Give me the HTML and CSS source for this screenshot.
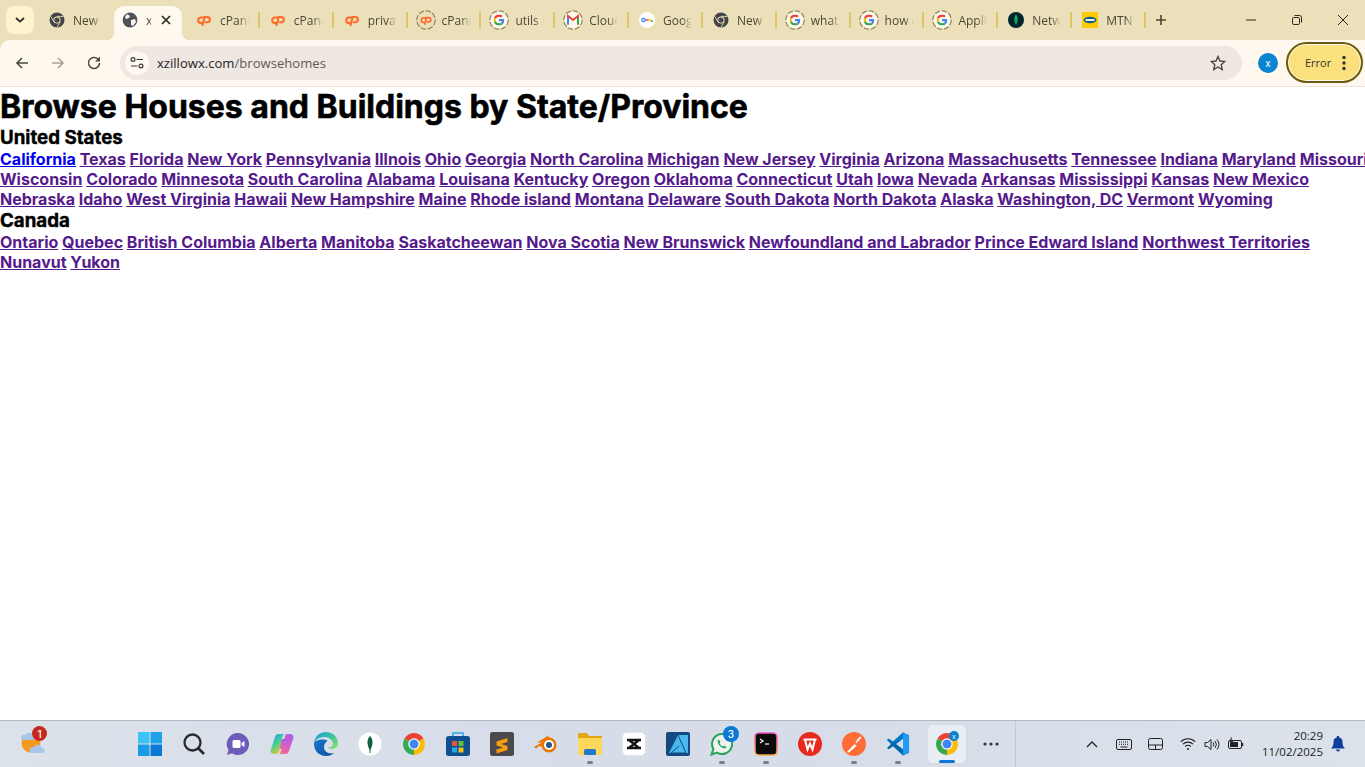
FILE: index.html
```html
<!DOCTYPE html>
<html lang="en">
<head>
<meta charset="utf-8">
<title>Browse Houses and Buildings</title>
<link rel="stylesheet" href="styles.css">
</head>
<body>
<svg class="defs" width="0" height="0" aria-hidden="true">
  <defs>
    <linearGradient id="copl" x1="0" y1="0" x2=".6" y2="1"><stop offset="0" stop-color="#2f8fe8"/><stop offset=".5" stop-color="#3fcf9a"/><stop offset="1" stop-color="#f6c325"/></linearGradient>
    <linearGradient id="copr" x1="1" y1="0" x2=".2" y2="1"><stop offset="0" stop-color="#a45be8"/><stop offset=".6" stop-color="#d85fc4"/><stop offset="1" stop-color="#f2708a"/></linearGradient>
    <linearGradient id="edgea" x1="0" y1="0" x2="1" y2=".7"><stop offset="0" stop-color="#1f9fd8"/><stop offset=".6" stop-color="#35c1a6"/><stop offset="1" stop-color="#79dc6c"/></linearGradient>
    <linearGradient id="edgeb" x1="0" y1="0" x2="1" y2="1"><stop offset="0" stop-color="#1678d0"/><stop offset="1" stop-color="#0b4f9e"/></linearGradient>
    <linearGradient id="termedge" x1="0" y1="0" x2="0" y2="1"><stop offset="0" stop-color="#e85bc0"/><stop offset="1" stop-color="#f5a742"/></linearGradient>
    <symbol id="g" viewBox="0 0 48 48">
      <path fill="#EA4335" d="M24 9.5c3.54 0 6.71 1.22 9.21 3.6l6.85-6.85C35.9 2.38 30.47 0 24 0 14.62 0 6.51 5.38 2.56 13.22l7.98 6.19C12.43 13.72 17.74 9.5 24 9.5z"/>
      <path fill="#4285F4" d="M46.98 24.55c0-1.57-.15-3.09-.38-4.55H24v9.02h12.94c-.58 2.96-2.26 5.48-4.78 7.18l7.73 6c4.51-4.18 7.09-10.36 7.09-17.65z"/>
      <path fill="#FBBC05" d="M10.53 28.59c-.48-1.45-.76-2.99-.76-4.59s.27-3.14.76-4.59l-7.98-6.19C.92 16.46 0 20.12 0 24c0 3.88.92 7.54 2.56 10.78l7.97-6.19z"/>
      <path fill="#34A853" d="M24 48c6.48 0 11.93-2.13 15.89-5.81l-7.73-6c-2.15 1.45-4.92 2.3-8.16 2.3-6.26 0-11.57-4.22-13.47-9.91l-7.98 6.19C6.51 42.62 14.62 48 24 48z"/>
    </symbol>
    <symbol id="ggroup" viewBox="0 0 20 20">
      <circle cx="10" cy="10" r="9.2" fill="#fff8ee" stroke="#98885c" stroke-width="1.3" stroke-dasharray="5.5 1.6"/>
      <use href="#g" x="4.5" y="4.5" width="11" height="11"/>
    </symbol>
    <symbol id="chromegray" viewBox="0 0 16 16">
      <circle cx="8" cy="8" r="7.5" fill="#43454a"/>
      <circle cx="8" cy="8" r="3.6" fill="#ebe0b9"/>
      <circle cx="8" cy="8" r="2.6" fill="#43454a"/>
      <path d="M8 4.4h6.4M4.9 9.8 1.8 4.4M11.1 9.8 8 15.2" stroke="#ebe0b9" stroke-width=".9"/>
    </symbol>
    <symbol id="cp" viewBox="0 0 16 16">
      <path d="M7.500 5.500 5 5.500a2.800 2.800 0 0 0 0 5.600h1.300" fill="none" stroke="#ff6c2c" stroke-width="2.100" stroke-linecap="round"/>
      <path d="M6.600 13 8.600 5H11.300a2.600 2.600 0 0 1 0 5.200H9.700" fill="none" stroke="#ff6c2c" stroke-width="2.100" stroke-linecap="round"/>
    </symbol>
    <symbol id="chrome" viewBox="0 0 48 48">
      <path fill="#ea4335" d="M24 24 5 13A22 22 0 0 1 43 13z"/>
      <path fill="#fbbc04" d="M24 24 43 13A22 22 0 0 1 24 46z"/>
      <path fill="#34a853" d="M24 24 24 46A22 22 0 0 1 5 13z"/>
      <circle cx="24" cy="24" r="11.5" fill="#fff"/>
      <circle cx="24" cy="24" r="9" fill="#4285f4"/>
    </symbol>
  </defs>
</svg>

<header class="browser">
<div class="tabstrip">
  <button class="tabsearch" type="button" aria-label="Search tabs"><svg width="10" height="6" viewBox="0 0 10 6"><path d="M1 1l4 3.6L9 1" fill="none" stroke="#2a2a20" stroke-width="1.8"/></svg></button>
  <div class="tab tab-first"><svg class="fav"><use href="#chromegray"/></svg><span class="tabtext">New Tab</span></div>
  <div class="tab-active"><svg class="fav" viewBox="0 0 16 16"><circle cx="8" cy="8" r="7.4" fill="#4c5158"/><path d="M5 2 8 4 7 6 4 7 3 5zM9 8l4-1 1 3-3 4-2-1z" fill="#fef8ee"/></svg><span class="tabtext tabtext-short">xzillowx</span><svg class="closex" width="10" height="10" viewBox="0 0 10 10"><path d="M1 1l8 8M9 1l-8 8" stroke="#2a2a20" stroke-width="1.7"/></svg></div>
  <div class="tab tab-nosep"><svg class="fav"><use href="#cp"/></svg><span class="tabtext">cPanel</span></div>
  <div class="tab"><svg class="fav"><use href="#cp"/></svg><span class="tabtext">cPanel</span></div>
  <div class="tab"><svg class="fav"><use href="#cp"/></svg><span class="tabtext">privacy</span></div>
  <div class="tab"><svg class="fav fav-big" viewBox="0 0 20 20"><circle cx="10" cy="10" r="9.2" fill="none" stroke="#98885c" stroke-width="1.3" stroke-dasharray="5.5 1.6"/><use href="#cp" x="3.5" y="3.5" width="13" height="13"/></svg><span class="tabtext">cPanel</span></div>
  <div class="tab"><svg class="fav fav-big"><use href="#ggroup"/></svg><span class="tabtext">utils in</span></div>
  <div class="tab"><svg class="fav fav-big" viewBox="0 0 20 20"><circle cx="10" cy="10" r="9.2" fill="#fff8ee" stroke="#98885c" stroke-width="1.3" stroke-dasharray="5.5 1.6"/><path d="M5 14.500V6L10 10l5-4v8.500" fill="none" stroke="#ea4335" stroke-width="2"/><path d="M5 7.500v7" stroke="#4285f4" stroke-width="2"/><path d="M15 7.500v7" stroke="#34a853" stroke-width="2"/></svg><span class="tabtext">Cloudflare</span></div>
  <div class="tab"><svg class="fav" viewBox="0 0 16 16"><circle cx="8" cy="8" r="8" fill="#fff"/><circle cx="4.500" cy="8" r="1.700" fill="none" stroke="#4285f4" stroke-width="1.300"/><path d="M6.500 8h3" stroke="#ea4335" stroke-width="1.500"/><path d="M9.500 8h3" stroke="#fbbc04" stroke-width="1.500"/><path d="M12 8.500h2v1.500h-2z" fill="#34a853"/></svg><span class="tabtext">Google</span></div>
  <div class="tab"><svg class="fav"><use href="#chromegray"/></svg><span class="tabtext">New Tab</span></div>
  <div class="tab"><svg class="fav fav-big"><use href="#ggroup"/></svg><span class="tabtext">what is</span></div>
  <div class="tab"><svg class="fav fav-big"><use href="#ggroup"/></svg><span class="tabtext">how do</span></div>
  <div class="tab"><svg class="fav fav-big"><use href="#ggroup"/></svg><span class="tabtext">Application</span></div>
  <div class="tab"><svg class="fav" viewBox="0 0 16 16"><circle cx="8" cy="8" r="8" fill="#04242e"/><path d="M8 2.500c2 2.200 2.600 5.500 0 10.500-2.600-5-2-8.300 0-10.500z" fill="#13aa52"/></svg><span class="tabtext">Network</span></div>
  <div class="tab"><svg class="fav" viewBox="0 0 16 16"><rect width="16" height="16" fill="#fc0"/><ellipse cx="8" cy="8" rx="6.500" ry="3.300" fill="#0b5c8a"/><rect x="3.500" y="7" width="9" height="2" fill="#f2f2e0"/></svg><span class="tabtext">MTN</span></div>
  <button class="newtab" type="button" aria-label="New tab"><svg width="12" height="12" viewBox="0 0 12 12"><path d="M6 1v10M1 6h10" stroke="#4a4630" stroke-width="1.600"/></svg></button>
  <div class="winctl">
    <svg width="12" height="12" viewBox="0 0 12 12"><path d="M1 6h10" stroke="#2a2a20"/></svg>
    <svg width="12" height="12" viewBox="0 0 12 12"><rect x="1.500" y="3.500" width="7" height="7" rx="1.300" fill="none" stroke="#2a2a20"/><path d="M3.500 1.500h5a2 2 0 0 1 2 2v5" fill="none" stroke="#2a2a20"/></svg>
    <svg width="12" height="12" viewBox="0 0 12 12"><path d="M1 1l10 10M11 1 1 11" stroke="#2a2a20"/></svg>
  </div>
</div>

<div class="toolbar">
  <svg class="navbtn" width="16" height="16" viewBox="0 0 16 16"><path d="M14 8H3M8 3 3 8l5 5" fill="none" stroke="#4a4a40" stroke-width="1.600"/></svg>
  <svg class="navbtn" width="16" height="16" viewBox="0 0 16 16"><path d="M2 8h11M8 3l5 5-5 5" fill="none" stroke="#a8a49a" stroke-width="1.600"/></svg>
  <svg class="navbtn" width="16" height="16" viewBox="0 0 16 16"><path d="M13.500 8A5.500 5.500 0 1 1 12 4.200L13.500 5.700" fill="none" stroke="#4a4a40" stroke-width="1.600"/><path d="M14 1.500v5h-5z" fill="#4a4a40"/></svg>
  <div class="omnibox">
    <span class="sitechip"><svg width="14" height="12" viewBox="0 0 14 12"><circle cx="3" cy="2.500" r="1.900" fill="none" stroke="#3a3a34" stroke-width="1.200"/><path d="M6.500 2.500H13M1 9h6.500" stroke="#3a3a34" stroke-width="1.200"/><circle cx="11" cy="9" r="1.900" fill="none" stroke="#3a3a34" stroke-width="1.200"/></svg></span>
    <span class="url"><span class="host">xzillowx.com</span>/browsehomes</span>
    <svg class="star" width="16" height="16" viewBox="0 0 16 16"><path d="M8 1.500 10 6l4.800.5-3.600 3.200 1 4.800L8 12l-4.200 2.500 1-4.800L1.200 6.500 6 6z" fill="none" stroke="#4a4a40" stroke-width="1.400"/></svg>
  </div>
  <span class="avatar">x</span>
  <div class="errorpill"><span>Error</span><svg width="4" height="16" viewBox="0 0 4 16"><circle cx="2" cy="2.500" r="1.700" fill="#333"/><circle cx="2" cy="8" r="1.700" fill="#333"/><circle cx="2" cy="13.500" r="1.700" fill="#333"/></svg></div>
</div>
</header>

<main class="page">
  <h1>Browse Houses and Buildings by State/Province</h1>
  <h2>United States</h2>
  <div class="links">
    <a class="fresh" href="#">California</a> <a href="#">Texas</a> <a href="#">Florida</a> <a href="#">New York</a> <a href="#">Pennsylvania</a> <a href="#">Illnois</a> <a href="#">Ohio</a> <a href="#">Georgia</a> <a href="#">North Carolina</a> <a href="#">Michigan</a> <a href="#">New Jersey</a> <a href="#">Virginia</a> <a href="#">Arizona</a> <a href="#">Massachusetts</a> <a href="#">Tennessee</a> <a href="#">Indiana</a> <a href="#">Maryland</a> <a href="#">Missouri</a> <a href="#">Wisconsin</a> <a href="#">Colorado</a> <a href="#">Minnesota</a> <a href="#">South Carolina</a> <a href="#">Alabama</a> <a href="#">Louisana</a> <a href="#">Kentucky</a> <a href="#">Oregon</a> <a href="#">Oklahoma</a> <a href="#">Connecticut</a> <a href="#">Utah</a> <a href="#">Iowa</a> <a href="#">Nevada</a> <a href="#">Arkansas</a> <a href="#">Mississippi</a> <a href="#">Kansas</a> <a href="#">New Mexico</a> <a href="#">Nebraska</a> <a href="#">Idaho</a> <a href="#">West Virginia</a> <a href="#">Hawaii</a> <a href="#">New Hampshire</a> <a href="#">Maine</a> <a href="#">Rhode island</a> <a href="#">Montana</a> <a href="#">Delaware</a> <a href="#">South Dakota</a> <a href="#">North Dakota</a> <a href="#">Alaska</a> <a href="#">Washington, DC</a> <a href="#">Vermont</a> <a href="#">Wyoming</a>
  </div>
  <h2>Canada</h2>
  <div class="links">
    <a href="#">Ontario</a> <a href="#">Quebec</a> <a href="#">British Columbia</a> <a href="#">Alberta</a> <a href="#">Manitoba</a> <a href="#">Saskatcheewan</a> <a href="#">Nova Scotia</a> <a href="#">New Brunswick</a> <a href="#">Newfoundland and Labrador</a> <a href="#">Prince Edward Island</a> <a href="#">Northwest Territories</a> <a href="#">Nunavut</a> <a href="#">Yukon</a>
  </div>
</main>

<footer class="taskbar">
  <div class="weather">
    <svg width="26" height="26" viewBox="0 0 26 26"><circle cx="11" cy="12" r="9.500" fill="#f39a1e"/><path d="M2.500 9h12a2.500 2.500 0 0 0-1.500-4.500A4.500 4.500 0 0 0 5 4a2.800 2.800 0 0 0-2.500 5z" fill="#a9c6ea"/><path d="M11.500 22h11a2.500 2.500 0 0 0-.5-5 4.500 4.500 0 0 0-8.500-.5 2.800 2.800 0 0 0-2 5.500z" fill="#a9c6ea"/></svg>
    <span class="badge badge-red">1</span>
  </div>
  <div class="apps">
    <span class="app"><svg width="24" height="24" viewBox="0 0 24 24"><rect width="11.500" height="11.500" fill="#3cc4f4"/><rect x="12.500" width="11.500" height="11.500" fill="#1ea2ea"/><rect y="12.500" width="11.500" height="11.500" fill="#1a9be6"/><rect x="12.500" y="12.500" width="11.500" height="11.500" fill="#0a78d4"/></svg></span>
    <span class="app"><svg width="24" height="24" viewBox="0 0 24 24"><circle cx="10.500" cy="10.500" r="8" fill="none" stroke="#2a2a2a" stroke-width="2.300"/><path d="m16 16 6 6" stroke="#2a2a2a" stroke-width="2.600"/></svg></span>
    <span class="app"><svg width="24" height="24" viewBox="0 0 24 24"><path d="M12 1a11 11 0 1 1-6 20.200L1 23l1.500-5A11 11 0 0 1 12 1z" fill="#6d5db8"/><rect x="6.500" y="8" width="8" height="8" rx="1.500" fill="#fff"/><path d="m15.500 11 3-2v6l-3-2z" fill="#fff"/></svg></span>
    <span class="app"><svg width="24" height="24" viewBox="0 0 24 24"><path d="M16 22h-6l5-18c.5-1.500 2-2 3-2h2c3 0 4 3 3 5l-4 12c-.5 2-2 3-3 3z" fill="url(#copr)"/><path d="M9 7h9l-3 10H6z" fill="url(#copr)"/><path d="M8 2h7c-1.200 0-2 1-2.500 2.500L9 20c-.5 1.500-2 2-3 2H4c-3 0-4-3-3-5L5 5c.5-2 2-3 3-3z" fill="url(#copl)"/></svg></span>
    <span class="app"><svg width="24" height="24" viewBox="0 0 24 24"><path d="M12 0C5 0 0 5 0 12c1-4 5-7 10-7 6 0 9 4 9 7 0 2-2 3.500-5 3.500 2 1.500 6 2 8 0 1.500-1 2-2.500 2-4C24 5 19 0 12 0z" fill="url(#edgea)"/><path d="M0 12c0 7 5 12 12 12 3.500 0 6-1 8-3-5 1.500-10-1-10-6 0-3 1.500-5 3.500-6-1-1-2-1.500-4.500-1.500C4 7.500 0 9 0 12z" fill="url(#edgeb)"/></svg></span>
    <span class="app"><svg width="24" height="24" viewBox="0 0 24 24"><circle cx="12" cy="12" r="11.500" fill="#fff"/><path d="M12 4c3.200 3.500 3.600 8 0 14.500-3.600-6.500-3.200-11 0-14.500z" fill="#116149"/><path d="M12 17v4" stroke="#116149"/></svg></span>
    <span class="app"><svg width="24" height="24"><use href="#chrome"/></svg></span>
    <span class="app"><svg width="24" height="24" viewBox="0 0 24 24"><path d="M7 5V1h10v4" fill="none" stroke="#27a7e7" stroke-width="1.500"/><rect y="4" width="24" height="20" rx="2.500" fill="#11508f"/><rect x="6" y="9" width="5" height="5" fill="#e8533a"/><rect x="12.500" y="9" width="5" height="5" fill="#6cbc3c"/><rect x="6" y="15.500" width="5" height="5" fill="#27a7e7"/><rect x="12.500" y="15.500" width="5" height="5" fill="#f8bc1a"/></svg></span>
    <span class="app"><svg width="24" height="24" viewBox="0 0 24 24"><rect width="24" height="24" rx="2.500" fill="#4a4a4a"/><path d="M6.500 9.500 17.500 6v4L11 12l6.500 2v0L17.500 18 6.500 21.500V17.500L13 15.500 6.500 13.500z" fill="#f79a14"/></svg></span>
    <span class="app"><svg width="26" height="24" viewBox="0 0 26 24"><path d="M1 15 9 10.500H4L13 5l2-1 3 3-6 8-6-1-3 2.500z" fill="#ea7600"/><circle cx="16" cy="13" r="7.500" fill="#ea7600"/><circle cx="16" cy="13" r="5" fill="#fff"/><circle cx="16" cy="13" r="3" fill="#265787"/></svg></span>
    <span class="app"><svg width="24" height="24" viewBox="0 0 24 24"><path d="M0 2a1 1 0 0 1 1-1h8l2 3h12a1 1 0 0 1 1 1v4H0z" fill="#e5a615"/><path d="M0 6h24v16a1 1 0 0 1-1 1H1a1 1 0 0 1-1-1z" fill="#fcd75c"/><rect x="6" y="17" width="12" height="6" rx="1.500" fill="#2378c9"/></svg></span>
    <span class="app"><svg width="24" height="24" viewBox="0 0 24 24"><rect x=".5" y=".5" width="23" height="23" rx="4.500" fill="#fff" stroke="#e3e3e3"/><path d="M5 8h14M5 16h14M7 8l10 8M17 8 7 16" fill="none" stroke="#111" stroke-width="2.300"/></svg></span>
    <span class="app"><svg width="24" height="24" viewBox="0 0 24 24"><rect width="24" height="24" rx="2" fill="#134a80"/><path d="M2 3h20v18H2z" fill="#4ab8ee"/><path d="M12 3 3 21H2V3z" fill="#134a80"/><path d="M12 3 20 21H5l8-7" fill="none" stroke="#134a80" stroke-width="1"/></svg></span>
    <span class="app"><svg width="24" height="24" viewBox="0 0 24 24"><path d="M12 2a10 10 0 1 1-5 18.600L1.500 22.500 3.400 17A10 10 0 0 1 12 2z" fill="#eef3f0" stroke="#25a35a" stroke-width="2"/><path d="M8.500 7.500c-1.500 1.500-1 4 1.500 6.500s5 3 6.500 1.500l-2-2-1.500 1c-1.500-.5-3-2-3.500-3.500l1-1.500z" fill="#25a35a"/></svg><span class="badge badge-blue">3</span></span>
    <span class="app"><svg width="24" height="24" viewBox="0 0 24 24"><rect x="1" y="1" width="22" height="22" rx="4" fill="#0a0a0a" stroke="url(#termedge)" stroke-width="1.600"/><path d="m6 7 3 2-3 2" fill="none" stroke="#fff" stroke-width="1.200"/><path d="M11 12h4" stroke="#fff" stroke-width="1.200"/></svg></span>
    <span class="app"><svg width="24" height="24" viewBox="0 0 24 24"><circle cx="12" cy="12" r="12" fill="#e8291c"/><path d="M5.500 7.500h13M7 7.500l2.500 10 2.500-6 2.500 6 2.500-10" fill="none" stroke="#fff" stroke-width="2"/></svg></span>
    <span class="app"><svg width="24" height="24" viewBox="0 0 24 24"><circle cx="12" cy="12" r="12" fill="#ff6c37"/><path d="m5 20 7.500-8 2 2L7 20.500zM13.500 11l2-4 3-2.500 1 1-2.500 3-3 3z" fill="#fff"/></svg></span>
    <span class="app"><svg width="24" height="24" viewBox="0 0 100 100"><path fill="#0065a9" d="M96 14 71 2 29 41 12 28 4 32l17 18L4 68l8 4 17-13 42 39 25-12z"/><path fill="#007acc" d="M71 2 29 41 12 28 4 32l17 18 50-22z"/><path fill="#1f9cf0" d="M71 2 96 14v72L71 98z"/><path fill="#d7dde8" d="M71 28v44L42 50z"/></svg></span>
    <span class="dot dot-1"></span><span class="dot dot-2"></span><span class="dot dot-3"></span><span class="dot dot-4"></span><span class="dot dot-5"></span>
  </div>
  <div class="activeapp"><svg width="24" height="24"><use href="#chrome"/></svg><span class="miniavatar">x</span><span class="activebar"></span></div>
  <svg class="more" width="16" height="4" viewBox="0 0 16 4"><circle cx="2" cy="2" r="1.600" fill="#333"/><circle cx="8" cy="2" r="1.600" fill="#333"/><circle cx="14" cy="2" r="1.600" fill="#333"/></svg>
  <span class="divider"></span>
  <div class="tray">
    <svg width="12" height="8" viewBox="0 0 12 8"><path d="M1 7l5-5 5 5" fill="none" stroke="#222" stroke-width="1.300"/></svg>
    <svg width="16" height="11" viewBox="0 0 16 11"><rect x=".5" y=".5" width="15" height="10" rx="1.500" fill="none" stroke="#222"/><path d="M3 3h10M3 5.300h10" stroke="#222" stroke-dasharray="1 1"/><path d="M4.500 8h7" stroke="#222"/></svg>
    <svg width="15" height="12" viewBox="0 0 15 12"><rect x=".5" y=".5" width="14" height="11" rx="2" fill="none" stroke="#222"/><path d="M.5 7h14M7.500 7v4.500" stroke="#222"/></svg>
    <svg width="16" height="12" viewBox="0 0 16 12"><path d="M.8 3.800a10 10 0 0 1 14.400 0M3 6.200a7 7 0 0 1 10 0M5.200 8.500a4 4 0 0 1 5.600 0" fill="none" stroke="#222" stroke-width="1.100"/><circle cx="8" cy="11" r="1" fill="#222"/></svg>
    <svg width="16" height="13" viewBox="0 0 16 13"><path d="M1 4.500h2.500L7 1.500v10l-3.500-3H1z" fill="none" stroke="#222"/><path d="M9 4.500a3 3 0 0 1 0 4M11 3a5.500 5.500 0 0 1 0 7M13 1.500a8 8 0 0 1 0 10" fill="none" stroke="#222"/></svg>
    <svg width="16" height="14" viewBox="0 0 16 14"><rect x=".5" y="3.500" width="13" height="8" rx="1.500" fill="none" stroke="#222"/><path d="M14.500 6v3" stroke="#222" stroke-width="1.500"/><path d="M2 5h8v5H2z" fill="#222"/><path d="M3.500 0 2 4.500h3L3.500 8" fill="#222" stroke="#222" stroke-width=".6"/></svg>
  </div>
  <div class="clock"><span>20:29</span><span>11/02/2025</span></div>
  <svg class="bell" width="14" height="16" viewBox="0 0 14 16"><path d="M7 0a1.300 1.300 0 0 1 1.300 1.500C11 2 11.500 4 11.500 6.500c0 3 1 4.500 2.500 6H0c1.500-1.500 2.500-3 2.500-6C2.500 4 3 2 5.700 1.500A1.300 1.300 0 0 1 7 0z" fill="#0f3f9e"/><path d="M5 13.500h4a2 2 0 0 1-4 0z" fill="#0f3f9e"/></svg>
</footer>
</body>
</html>
```

FILE: styles.css
```css
* { box-sizing: border-box; }
html, body { margin: 0; height: 100%; }
body {
  display: flex;
  flex-direction: column;
  height: 767px;
  width: 1365px;
  overflow: hidden;
  background: #fff;
  font-family: Inter, "Liberation Sans", sans-serif;
}
.defs { position: absolute; }
button { border: 0; padding: 0; background: none; }

.browser { flex: none; background: #ebe0b9; }

/* tab strip */
.tabstrip {
  display: flex;
  align-items: center;
  height: 40px;
  padding-left: 6px;
  font-family: "Open Sans", "Liberation Sans", sans-serif;
  font-size: 12px;
  color: #4c4838;
}
.tabsearch {
  width: 28px;
  height: 28px;
  margin-right: 6px;
  margin-bottom: 1px;
  border-radius: 8px;
  background: #fdf3cf;
  display: flex;
  align-items: center;
  justify-content: center;
}
.tab {
  flex: none;
  width: 73.850px;
  height: 16px;
  display: flex;
  align-items: center;
  gap: 8px;
  padding-left: 10px;
  border-right: 2px solid #dfc566;
}
.tab-first { width: 74px; border-right-color: transparent; padding-left: 9px; }
.tab-nosep { margin-left: 4px; }
.fav { flex: none; width: 16px; height: 16px; }
.fav-big { width: 20px; height: 20px; margin-left: -2px; margin-right: -2px; }
.tabtext {
  display: block;
  width: 29px;
  flex: none;
  white-space: nowrap;
  overflow: hidden;
  mask-image: linear-gradient(90deg, #000 65%, transparent);
  -webkit-mask-image: linear-gradient(90deg, #000 65%, transparent);
}
.tab-active {
  flex: none;
  position: relative;
  align-self: flex-end;
  width: 68px;
  height: 34px;
  margin-top: 6px;
  padding: 0 11px 6px 8px;
  background: #fef8ee;
  border-radius: 10px 10px 0 0;
  display: flex;
  align-items: center;
  gap: 8px;
}
.tab-active::before,
.tab-active::after {
  content: "";
  position: absolute;
  bottom: 0;
  width: 8px;
  height: 8px;
}
.tab-active::before { left: -8px; background: radial-gradient(circle at 0 0, transparent 8px, #fef8ee 8.500px); }
.tab-active::after { right: -8px; background: radial-gradient(circle at 100% 0, transparent 8px, #fef8ee 8.500px); }
.tabtext-short { width: 6px; }
.closex { margin-left: auto; }
.newtab {
  width: 28px;
  height: 28px;
  display: flex;
  align-items: center;
  justify-content: center;
  margin-left: 1px;
}
.winctl {
  margin-left: auto;
  display: flex;
  align-items: center;
  gap: 34px;
  padding-right: 16px;
}

/* toolbar */
.toolbar {
  height: 47px;
  background: #fef8ee;
  border-bottom: 1px solid #ece5d9;
  border-top-left-radius: 10px;
  display: flex;
  align-items: center;
  padding-left: 14px;
  gap: 20px;
}
.navbtn { flex: none; }
.omnibox {
  flex: none;
  width: 1122px;
  height: 34px;
  margin-left: -2px;
  margin-top: -1px;
  background: #efe7e2;
  border-radius: 17px;
  display: flex;
  align-items: center;
  padding: 0 16px 0 5px;
}
.sitechip {
  width: 24px;
  height: 24px;
  border-radius: 50%;
  background: #fef8ee;
  display: flex;
  align-items: center;
  justify-content: center;
}
.url {
  margin-left: 8px;
  font-family: "Open Sans", "Liberation Sans", sans-serif;
  font-size: 13.100px;
  color: #5f5a52;
}
.host { color: #26241f; }
.star { margin-left: auto; }
.avatar {
  flex: none;
  width: 20px;
  height: 20px;
  margin-left: -4px;
  margin-top: -1px;
  border-radius: 50%;
  background: #0a84d0;
  color: #fff;
  font-size: 10px;
  display: flex;
  align-items: center;
  justify-content: center;
}
.errorpill {
  flex: none;
  width: 77px;
  height: 41px;
  margin-left: -12px;
  margin-top: -1px;
  border: 2px solid #6b5a10;
  border-radius: 21px;
  background: #fae17d;
  box-shadow: inset 0 0 0 1px #fef8ee;
  display: flex;
  align-items: center;
  gap: 11px;
  padding-left: 17px;
  font-family: "Open Sans", "Liberation Sans", sans-serif;
  font-size: 11px;
  color: #3a3520;
}

/* page */
.page {
  flex: 1;
  width: 1372px;
  overflow: hidden;
}
h1 { margin: 0; font-size: 32px; font-weight: 700; color: #000; -webkit-text-stroke: 0.6px #000; }
h2 { margin: 0; font-size: 18.720px; font-weight: 700; color: #000; -webkit-text-stroke: 0.4px #000; }
.links { font-size: 16px; font-weight: 700; }
.links a { color: #551a8b; }
.links a.fresh { color: #0000ee; }

/* taskbar */
.taskbar {
  flex: none;
  height: 47px;
  position: relative;
  display: flex;
  align-items: center;
  background: linear-gradient(90deg, #dbe2ea, #d6dce8 50%, #dbe2ea);
  border-top: 1px solid #b4b7bd;
}
.weather {
  flex: none;
  position: relative;
  margin-left: 20px;
  width: 26px;
  height: 26px;
}
.badge {
  position: absolute;
  display: flex;
  align-items: center;
  justify-content: center;
  border-radius: 50%;
  color: #fff;
  font-size: 10px;
  font-weight: 500;
}
.badge-red { left: 12px; top: -5px; width: 15px; height: 15px; background: #c42b1c; }
.badge-blue { right: 5px; top: 5px; width: 16px; height: 16px; background: #0a78d4; }
.apps {
  flex: none;
  position: relative;
  display: flex;
  align-self: stretch;
  margin-left: 82px;
}
.app {
  position: relative;
  width: 44px;
  display: flex;
  align-items: center;
  justify-content: center;
}
.dot {
  position: absolute;
  bottom: 3px;
  width: 6px;
  height: 3px;
  border-radius: 2px;
  background: #7a7f88;
}
.dot-1 { left: 459px; }
.dot-2 { left: 591px; }
.dot-3 { left: 635px; }
.dot-4 { left: 723px; }
.dot-5 { left: 767px; }
.activeapp {
  flex: none;
  position: relative;
  width: 38px;
  height: 38px;
  margin-left: 8px;
  border-radius: 4px;
  background: #e9eef4;
  box-shadow: 0 0 1px #b8bcc4;
  display: flex;
  align-items: center;
  justify-content: center;
}
.miniavatar {
  position: absolute;
  right: 7px;
  top: 6px;
  width: 10px;
  height: 10px;
  border-radius: 50%;
  background: #0a84d0;
  color: #fff;
  font-size: 6px;
  display: flex;
  align-items: center;
  justify-content: center;
}
.activebar {
  position: absolute;
  left: 11px;
  bottom: 0;
  width: 16px;
  height: 3px;
  border-radius: 2px;
  background: #0a78d4;
}
.more { flex: none; margin-left: 17px; }
.divider { flex: none; width: 1px; align-self: stretch; margin-left: 16px; background: #c3c9d2; }
.tray {
  flex: none;
  display: flex;
  align-items: center;
  margin-left: 70px;
}
.tray svg { flex: none; }
.tray svg:nth-child(1) { margin-right: 18px; }
.tray svg:nth-child(2) { margin-right: 16px; }
.tray svg:nth-child(3) { margin-right: 17px; }
.tray svg:nth-child(4) { margin-right: 8px; }
.tray svg:nth-child(5) { margin-right: 8px; }
.clock {
  flex: none;
  width: 80px;
  margin-left: -1px;
  display: flex;
  flex-direction: column;
  align-items: flex-end;
  font-family: "Open Sans", "Liberation Sans", sans-serif;
  font-size: 11.500px;
  line-height: 16px;
  color: #1c1c1c;
}
.bell { flex: none; margin-left: 8px; }
```
